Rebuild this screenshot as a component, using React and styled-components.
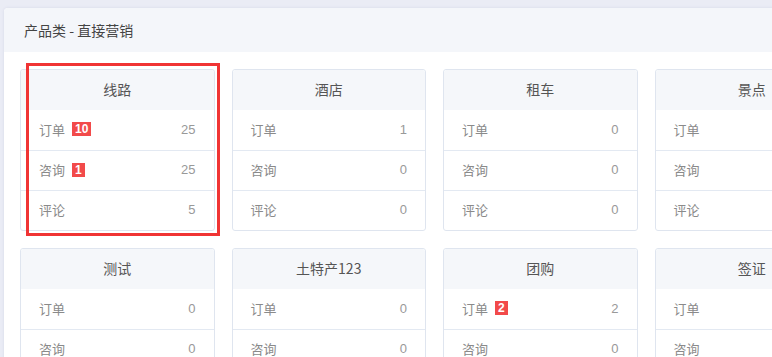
import React from 'react'
import styled, { createGlobalStyle } from 'styled-components'

const GlobalStyle = createGlobalStyle`
  html, body {
    margin: 0;
    padding: 0;
    background: #eaecf5;
    overflow: hidden;
    font-family: "Noto Sans CJK SC", "Noto Sans", sans-serif;
  }
`

const Page = styled.div`
  padding: 8px 0 0 4px;
  width: 900px;
`

const Panel = styled.div`
  background: #fff;
  border-radius: 4px 0 0 0;
  box-shadow: 0 0 3px rgba(120, 130, 170, 0.18);
  overflow: hidden;
`

const PanelHeader = styled.div`
  height: 44px;
  display: flex;
  align-items: center;
  padding-left: 20px;
  background: #f4f6fa;
  font-size: 14px;
  color: #444;
`

const PanelBody = styled.div`
  display: grid;
  grid-template-columns: repeat(4, 194.5px);
  column-gap: 17px;
  row-gap: 17px;
  padding: 17px 16px 20px;
`

const Card = styled.div`
  position: relative;
  border: 1px solid #dfe5ef;
  border-radius: 3px;
  background: #fff;
`

const CardTitle = styled.div`
  box-sizing: border-box;
  height: 40px;
  padding-bottom: 3px;
  display: flex;
  align-items: center;
  justify-content: center;
  background: #f5f7fa;
  font-size: 14px;
  color: #555;
  border-radius: 3px 3px 0 0;
`

const Row = styled.div`
  box-sizing: border-box;
  height: 40px;
  padding: 0 18px 2px 18px;
  display: flex;
  align-items: center;
  justify-content: space-between;
  border-top: ${p => (p.first ? 'none' : '1px solid #e3e9f2')};
  font-size: 13px;
  color: #8a8a8a;
`

const Label = styled.span`
  display: flex;
  align-items: center;
`

const Badge = styled.span`
  margin-left: 7px;
  background: #f24a4a;
  color: #fff;
  font-family: "Liberation Sans", Arial, sans-serif;
  font-weight: bold;
  font-size: 12px;
  line-height: 14px;
  padding: 0 3px;
`

const Value = styled.span`
  color: #999;
  font-family: "Liberation Sans", Arial, sans-serif;
  font-size: 13px;
`

const Highlight = styled.div`
  position: absolute;
  top: -7px;
  left: 5px;
  width: 194px;
  height: 173px;
  box-sizing: border-box;
  border: 3px solid #f03434;
  pointer-events: none;
`

const cards = [
  { title: '线路', rows: [['订单', 10, 25], ['咨询', 1, 25], ['评论', 0, 5]], mark: true },
  { title: '酒店', rows: [['订单', 0, 1], ['咨询', 0, 0], ['评论', 0, 0]] },
  { title: '租车', rows: [['订单', 0, 0], ['咨询', 0, 0], ['评论', 0, 0]] },
  { title: '景点', rows: [['订单', 0, 0], ['咨询', 0, 0], ['评论', 0, 0]] },
  { title: '测试', rows: [['订单', 0, 0], ['咨询', 0, 0], ['评论', 0, 0]] },
  { title: '土特产123', rows: [['订单', 0, 0], ['咨询', 0, 0], ['评论', 0, 0]] },
  { title: '团购', rows: [['订单', 2, 2], ['咨询', 0, 0], ['评论', 0, 0]] },
  { title: '签证', rows: [['订单', 0, 0], ['咨询', 0, 0], ['评论', 0, 0]] },
]

function App() {
  return (
    <Page>
      <GlobalStyle />
      <Panel>
        <PanelHeader>产品类 - 直接营销</PanelHeader>
        <PanelBody>
          {cards.map((card) => (
            <Card key={card.title}>
              <CardTitle>{card.title}</CardTitle>
              {card.rows.map(([name, badge, value], i) => (
                <Row key={name} first={i === 0}>
                  <Label>
                    {name}
                    {badge > 0 && <Badge>{badge}</Badge>}
                  </Label>
                  <Value>{value}</Value>
                </Row>
              ))}
              {card.mark && <Highlight />}
            </Card>
          ))}
        </PanelBody>
      </Panel>
    </Page>
  )
}

export default App
